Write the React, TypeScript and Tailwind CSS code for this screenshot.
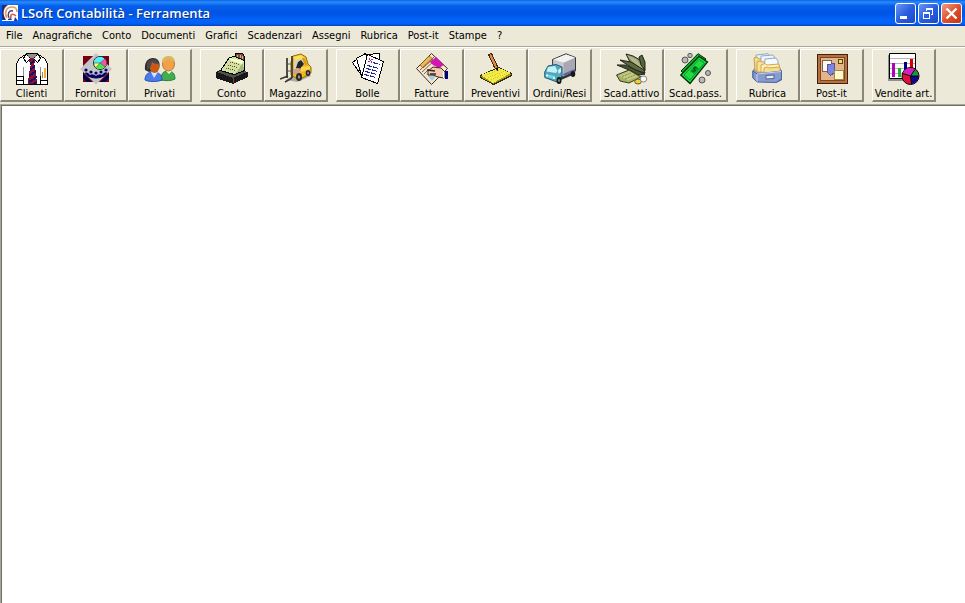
import React from 'react';

/* ---------------- ICONS ---------------- */

const Icon = ({ crisp = true, children }: { crisp?: boolean; children: React.ReactNode }) => (
  <svg
    width="32"
    height="32"
    viewBox="0 0 32 32"
    fill="none"
    shapeRendering={crisp ? 'crispEdges' : 'auto'}
    aria-hidden="true"
    className="shrink-0"
  >
    {children}
  </svg>
);

const ShirtIcon = () => (
  <Icon>
    <path d="M9.500 1.500L3.500 5.500L.5 10.500V31.500H31.500V10.500L28.500 5.500L22.500 1.500Z" fill="#fff" stroke="#000" />
    <path d="M10.500 .5H21.500L20.500 3.500L17.500 5.500H14.500L11.500 3.500Z" fill="#909090" stroke="#000" />
    <path d="M9.500 1.500L7.500 5.500L10.500 9.500L14.500 5.500M22.500 1.500L24.500 5.500L21.500 9.500L17.500 5.500" fill="#fff" stroke="#000" />
    <path d="M14 5H18L19 9L18 11L20 20L21 31H12L13 20L15 11L13 9Z" fill="#8a1030" />
    <path d="M14 11L18 8M14 17L19 13M13 23L20 18M13 29L21 24M17 31L21 29" stroke="#101070" strokeWidth="2" />
    <path d="M7.500 23V31M24.500 23V31M1 23.500H7M1 27.500H7M25 27.500H31" stroke="#000" />
    <path d="M7.500 14V23M24.500 14V23" stroke="#909090" />
    <path d="M29 15V25" stroke="#e8b040" strokeWidth="2" />
    <path d="M26.500 19V25" stroke="#c08020" />
  </Icon>
);

const SupplierIcon = () => (
  <Icon crisp={false}>
    <path d="M3 3H29V29H3Z" fill="#760010" />
    <path d="M3 20L12 29H7L3 25ZM29 20L20 29H25L29 25Z" fill="#000050" />
    <path d="M16 0L32 16L16 31.500L0 16Z" fill="#c4c4c8" />
    <path d="M4.500 20C7 18.500 9 20.500 10 22C12 20.500 14 21.500 16 23C18 21.500 20 20.500 22 22C24 19.500 26 18.500 27.500 20L24 23.500C19 26 13 26 8 23.500Z" fill="#000060" />
    <circle cx="6" cy="17" r="1.600" fill="#000060" />
    <circle cx="11" cy="19" r="1.600" fill="#000060" />
    <circle cx="16" cy="20" r="1.600" fill="#000060" />
    <circle cx="21" cy="19" r="1.600" fill="#000060" />
    <circle cx="26" cy="17" r="1.600" fill="#000060" />
    <circle cx="20" cy="10" r="6.500" fill="#ffff50" stroke="#003050" />
    <path d="M20 10H14A6 6 0 0 1 20 4Z" fill="#50f0ff" />
    <path d="M20 10V4A6 6 0 0 1 25 7Z" fill="#50f0ff" />
    <path d="M20 10L25 6A6 6 0 0 1 25 13.500Z" fill="#ff50a0" />
    <path d="M20 10L25 13.500A6 6 0 0 1 16 14.500Z" fill="#50e050" />
    <path d="M14 10H20L25 6M20 10L25 13.500M20 10L16 14.500" stroke="#206060" strokeWidth=".6" />
  </Icon>
);

const PeopleIcon = () => (
  <Icon crisp={false}>
    <path d="M17 27C17 21 19 18 24 18C29 18 31 21 31 26C27 28 22 28 17 27Z" fill="#42ad4e" stroke="#25833a" />
    <path d="M22 18L25 21L28 18Z" fill="#e8ffe0" />
    <ellipse cx="24.500" cy="11" rx="6" ry="7" fill="#f3a048" stroke="#b47c38" />
    <path d="M18 10C17 1 31 1 31 9C28 8 26 6 23 7C21 8 20 9 18 10Z" fill="#d8b860" />
    <path d="M1 27C1 22 4 19 9 19C15 19 18 22 18 27C13 29 5 29 1 27Z" fill="#4a7cec" stroke="#2850b8" />
    <path d="M7 19L10 25L14 19Z" fill="#dae6ff" />
    <path d="M1 17C0 9 4 5 9 5C14 5 17 9 15 16L5 19Z" fill="#303034" />
    <ellipse cx="10.500" cy="14" rx="4.800" ry="6" fill="#c95a16" />
    <path d="M3 10C6 5 13 5 15 11C12 11 9 10 8 9C7 13 6 16 3 17Z" fill="#48484e" />
  </Icon>
);

const RegisterIcon = () => (
  <Icon>
    <path d="M0 19L10 14L32 19V24L17 31L0 25Z" fill="#181818" />
    <path d="M1 19L17 25L31 19L29 18L18 22L4 18Z" fill="#505050" />
    <path d="M17.500 25V30" stroke="#505050" />
    <path d="M19.500 5.500V.5H26.500L28.500 3.500V8.500Z" fill="#804838" stroke="#000" />
    <path d="M21.500 2V6M24.500 2V6M26.500 3V7" stroke="#e0b0a0" />
    <path d="M4.500 17.500L13.500 4.500L18.500 3.500L28.500 7.500V17.500L18.500 21.500Z" fill="#cfe2a4" stroke="#000" />
    <path d="M14 5L28 8L26 11L13 7Z" fill="#eefccc" />
    <path d="M19 21L27 10L28 17Z" fill="#a5b97b" />
    <path d="M14 9.500H15M18 10.500H19M22 11.500H23M12 12.500H13M16 13.500H17M20 14.500H21M10 15.500H11M14 16.500H15M18 17.500H19" stroke="#c33b18" />
    <path d="M16 9.500H17M20 10.500H21M14 12.500H15M18 13.500H19M12 15.500H13M16 16.500H17" stroke="#404020" />
  </Icon>
);

const ForkliftIcon = () => (
  <Icon crisp={false}>
    <path d="M6 27L17 29L31 23L29 19L20 17Z" fill="#b0aea0" />
    <path d="M11 9L13 3L21 1L26 4L28 11L31 14V20L19 27L11 22Z" fill="#efb71d" stroke="#92700b" />
    <path d="M14 7L22 5L26 12H20L14 17Z" fill="#d8d4b8" />
    <path d="M13 4L21 2L25 5L15 7Z" fill="#ffdf53" />
    <path d="M18 9L21 7L24 11L20 16L16 15Z" fill="#22242b" />
    <path d="M23 5L26 12" stroke="#d79a0c" strokeWidth="2" />
    <path d="M13 17L18 15L22 16L18 21L13 21Z" fill="#d2a08c" />
    <path d="M21 14L30 13L30 16L21 19Z" fill="#ffd44c" />
    <ellipse cx="19" cy="24" rx="3" ry="4" fill="#292929" />
    <ellipse cx="19" cy="24" rx="1" ry="1.800" fill="#a0a0a0" />
    <ellipse cx="28" cy="20" rx="2.300" ry="3" fill="#292929" />
    <ellipse cx="28" cy="20" rx=".8" ry="1.300" fill="#a0a0a0" />
    <path d="M7 5V25M12 3V25" stroke="#403c38" strokeWidth="1.800" />
    <path d="M7 11H12M7 18H12" stroke="#595959" />
    <path d="M8 23L0 26M12 25L5 29" stroke="#353535" strokeWidth="1.500" />
  </Icon>
);

const NotesIcon = () => (
  <Icon>
    <path d="M.5 9.500L8.500 3.500L17.500 15.500L9.500 22.500Z" fill="#fff" stroke="#000" />
    <path d="M4.500 5.500L13.500 .5L19.500 18.500L9.500 22.500Z" fill="#fff" stroke="#000" />
    <path d="M14.500 1.500L27.500 .5L27.500 6.500H20.500Z" fill="#fff" stroke="#000" />
    <path d="M15.500 1.500L31.500 8.500L25.500 30.500L9.500 24.500Z" fill="#fff" stroke="#000" />
    <path d="M17 5L20 10M21 6L16 9" stroke="#a03088" />
    <path d="M21 9.500L28 11.500M15 12.500L27 15.500M14 15.500L26 18.500M13 18.500L25 21.500M12 21.500L24 24.500" stroke="#242494" strokeWidth="1.200" strokeDasharray="5 1" />
  </Icon>
);

const InvoiceIcon = () => (
  <Icon crisp={false}>
    <path d="M.5 15.500L15.500 .5L31.500 15.500L15.500 31.500Z" fill="#f4e8d0" stroke="#402c20" />
    <path d="M4 12L13 3L17 6L7 15Z" fill="#f0b850" stroke="#735014" strokeWidth=".7" />
    <path d="M4 17L18 4M6 19L19 7M8 21L13 16" stroke="#805840" />
    <path d="M14 9L20 4L28 12L23 15L17 12Z" fill="#d216b4" />
    <path d="M10 21L14 18L20 23L16 28Z" fill="#aacbe2" />
    <path d="M12 18L17 14L25 15L28 18V25L22 24L17 22L12 22Z" fill="#f4caae" stroke="#402820" />
    <path d="M11 17L19 18M14 21H20" stroke="#332823" strokeWidth="1.500" />
    <path d="M29 18H32V26H29Z" fill="#000080" />
    <path d="M27.500 18V25" stroke="#fff" />
  </Icon>
);

const PencilPadIcon = () => (
  <Icon>
    <path d="M.5 22.500L18.500 14.500L31.500 20.500V22.500L13.500 31.500L.5 24.500Z" fill="#a89c23" stroke="#302d0a" />
    <path d="M1 22L19 15L31 20L13 30Z" fill="#f2eb45" />
    <path d="M5 22.500L20 16.500M8 24.500L24 18.500M11 26.500L27 20.500" stroke="#d0c838" strokeDasharray="1 1" />
    <path d="M8.500 1.500L11.500 .5L17.500 13.500V17.500L14.500 14.500Z" fill="#dc8a48" stroke="#4a2712" />
    <path d="M16 15H18V18Z" fill="#000" />
  </Icon>
);

const TruckIcon = () => (
  <Icon crisp={false}>
    <path d="M9 22L17 27L31 21V17L14 14Z" fill="#30333a" />
    <path d="M8.500 6.500L22 .8L31.500 4.500V18L19 24L9 20Z" fill="#c9c8cc" stroke="#34343b" />
    <path d="M9.500 6.500L22 1.500L31 4.500L19.500 9.500Z" fill="#f2f2f3" />
    <path d="M19.500 10L31 5V18L19.500 23Z" fill="#a9a8b2" />
    <path d="M19.500 22L31 17" stroke="#5b62a6" strokeWidth="2" />
    <path d="M.7 19L4 13L12 11.500L18 14V23L13 29L.8 24.500Z" fill="#4ea8bf" stroke="#205e78" />
    <path d="M4 14L11 13L13.500 18L12 20L2.500 18.500Z" fill="#c4f0fa" />
    <path d="M14 17L17 15V19L14.500 21Z" fill="#d4f1f2" />
    <path d="M2 21L11 23V26L2 24Z" fill="#7cd0e4" />
    <path d="M2 22.500H4M9 25H11" stroke="#fff" strokeWidth="1.500" />
    <ellipse cx="15" cy="27.500" rx="2.500" ry="3.500" fill="#181818" />
    <ellipse cx="15" cy="27.500" rx=".8" ry="1.500" fill="#999" />
    <ellipse cx="29" cy="21" rx="2.300" ry="3" fill="#181818" />
  </Icon>
);

const WalletIcon = () => (
  <Icon crisp={false}>
    <path d="M10 1L17 3L26 8L29 18L24 17L14 9Z" fill="#8d9468" stroke="#20251b" />
    <path d="M11 2L20 6L26 14L27 17L16 8Z" fill="#b8b78c" />
    <path d="M23 4L26 2L29 9L29 17L25 12Z" fill="#56653c" stroke="#20251b" />
    <path d="M4 7L15 9L28 17L29 20L19 17Z" fill="#5b6b3c" stroke="#20251b" />
    <path d="M1 12H9L20 17L29 21L23 22L13 17Z" fill="#46552e" stroke="#20251b" />
    <path d="M.5 22L13 17L25 24L13 30L4 28Z" fill="#a9b263" stroke="#333a20" />
    <path d="M3 22.500L13 18L22 23.500L12 27.500Z" fill="#c4c882" />
    <path d="M6 23.500L15 20M9 26L19 22" stroke="#7a8a40" strokeDasharray="2 1" />
    <ellipse cx="22" cy="28.500" rx="3.300" ry="2.500" fill="#ead043" stroke="#6b5c1a" />
    <ellipse cx="27.500" cy="26" rx="3.300" ry="3" fill="#f8f8f4" stroke="#888" />
  </Icon>
);

const BanknoteIcon = () => (
  <Icon crisp={false}>
    <path d="M1 18L18 .7L26 6L9 25Z" fill="#0aa82c" stroke="#002b0b" />
    <path d="M.8 22L19 3.500L27.500 9L10 30.500Z" fill="#20dc40" stroke="#002b0b" strokeWidth="1.300" />
    <path d="M4 22L19 6.500L24.500 10L10 27Z" stroke="#009828" />
    <path d="M10 18L15 12.500L19 15.500L14 21Z" fill="#07982a" />
    <path d="M16.500 14.500L13.500 15L15.500 17.500L12.500 18.500" stroke="#003b0b" />
    <circle cx="5" cy="7" r="3" fill="#b8b8b8" stroke="#555" />
    <circle cx="10" cy="2.500" r="2.200" fill="#b8b8b8" stroke="#555" />
    <circle cx="28" cy="20" r="2.500" fill="#b8b8b8" stroke="#555" />
    <circle cx="22" cy="27" r="3" fill="#b8b8b8" stroke="#555" />
  </Icon>
);

const FileBoxIcon = () => (
  <Icon crisp={false}>
    <path d="M.8 18L4 14H27L29.500 18V27L24 29.500L4 28L.8 25Z" fill="#8298cf" stroke="#5a6d9e" />
    <path d="M4 2L16 .7L18 3V17H4Z" fill="#e8f2fc" stroke="#92aac4" />
    <path d="M2 5L5 4L7 6L16 5V18H3Z" fill="#f4da88" stroke="#c8a050" />
    <path d="M9 3L21 2L23 5V18H9Z" fill="#eef5fd" stroke="#92aac4" />
    <path d="M5 9L8 8L10 9L20 8V19H5Z" fill="#f8e298" stroke="#c8a050" />
    <path d="M13 6L24 5L26 8V18H12Z" fill="#f5faff" stroke="#92aac4" />
    <path d="M9 12L13 10.500L15 12L27 11L28 19H9Z" fill="#fff0b4" stroke="#d0a850" />
    <path d="M12 15L15 14L17 15L28 14V20H12Z" fill="#f6dc90" stroke="#d0a850" />
    <path d="M1 18L5 21L29.500 18V26L24 29.500L5 29L1 25Z" fill="#859bd2" stroke="#52679e" />
    <path d="M5 21L29 18.500M5 21V28.500" stroke="#c6d6f6" />
    <path d="M14 22.500L22 22V25.500L14 26Z" fill="#e6ebf6" stroke="#51638e" />
  </Icon>
);

const CorkboardIcon = () => (
  <Icon>
    <path d="M1.500 1.500H31.500V30.500H1.500Z" fill="#b8713c" stroke="#402010" />
    <path d="M4.500 4.500H28.500V27.500H4.500Z" fill="#e4b48a" stroke="#7c4822" />
    <path d="M6.500 7.500H15.500V18.500H6.500Z" fill="#faf9f4" stroke="#80604c" />
    <path d="M11.500 11.500L18.500 10.500V19.500L14.500 22.500L11.500 19.500Z" fill="#7c86e0" stroke="#5058a0" />
    <path d="M18.500 17.500H27.500V26.500H18.500Z" fill="#fff8c9" stroke="#a08850" />
    <path d="M22.500 6.500H26.500V10.500H22.500Z" fill="#e8dc78" stroke="#554414" />
  </Icon>
);

const SalesChartIcon = () => (
  <Icon crisp={false}>
    <path d="M0 2H3V26H20V28H0Z" fill="#909090" />
    <path d="M1.500 .5H27.500V25.500H1.500Z" fill="#fff" stroke="#000" />
    <path d="M2 5.500H27M2 10.500H27M2 15.500H27M2 20.500H27" stroke="#b5b5b5" />
    <path d="M5.500 10V24" stroke="#b800b8" strokeWidth="3" />
    <path d="M11.500 15V24" stroke="#20b030" strokeWidth="3" />
    <path d="M17.500 9V24" stroke="#000080" strokeWidth="3" />
    <path d="M23.500 6V24" stroke="#d80000" strokeWidth="3" />
    <circle cx="22.500" cy="23" r="8.500" fill="#e0103c" stroke="#000" />
    <path d="M22.500 23L14.700 20.500A8 8 0 0 1 27 16.500Z" fill="#cf23bf" />
    <path d="M22.500 23L27 16.500A8 8 0 0 1 30.500 23Z" fill="#189848" />
    <path d="M22.500 23H30.500A8 8 0 0 1 23.500 31Z" fill="#0a0a90" />
    <path d="M14.700 20.500L22.500 23L27 16.500M22.500 23H30.500M22.500 23L23.500 31" stroke="#000" strokeWidth=".9" />
  </Icon>
);

const AppLogo = () => (
  <svg width="16" height="16" viewBox="0 0 16 16" fill="none" aria-hidden="true" className="shrink-0">
    <path d="M0 0H16V16H0Z" fill="#fff" />
    <path d="M6 0H0V15L4 15C1 10 0 4 6 0Z" fill="#252b78" />
    <path d="M5 13C2 8 4 2 10 2C13 2 15 4 15 7" stroke="#e99c55" strokeWidth="1.600" />
    <path d="M7 13C5 9 7 5 11 6" stroke="#40407f" strokeWidth="1.400" />
    <path d="M9 13C8 9 11 8 14 11" stroke="#d55e45" strokeWidth="1.600" />
    <path d="M6 14L9 13L10 15H6ZM13 12L16 16H12Z" fill="#31307f" />
  </svg>
);

/* ---------------- DATA ---------------- */

const menus = [
  'File',
  'Anagrafiche',
  'Conto',
  'Documenti',
  'Grafici',
  'Scadenzari',
  'Assegni',
  'Rubrica',
  'Post-it',
  'Stampe',
  '?',
];

const toolGroups = [
  [
    { label: 'Clienti', icon: ShirtIcon },
    { label: 'Fornitori', icon: SupplierIcon },
    { label: 'Privati', icon: PeopleIcon },
  ],
  [
    { label: 'Conto', icon: RegisterIcon },
    { label: 'Magazzino', icon: ForkliftIcon },
  ],
  [
    { label: 'Bolle', icon: NotesIcon },
    { label: 'Fatture', icon: InvoiceIcon },
    { label: 'Preventivi', icon: PencilPadIcon },
    { label: 'Ordini/Resi', icon: TruckIcon },
  ],
  [
    { label: 'Scad.attivo', icon: WalletIcon },
    { label: 'Scad.pass.', icon: BanknoteIcon },
  ],
  [
    { label: 'Rubrica', icon: FileBoxIcon },
    { label: 'Post-it', icon: CorkboardIcon },
  ],
  [{ label: 'Vendite art.', icon: SalesChartIcon }],
];

/* ---------------- WINDOW PARTS ---------------- */

const captionButton =
  'flex size-[21px] items-center justify-center rounded-[3px] border border-white bg-gradient-to-br';

const TitleBar = () => (
  <header className="flex h-[26px] items-center bg-[linear-gradient(180deg,#0c62e0_0%,#2a8bff_8%,#0560ea_22%,#0054e3_50%,#0264fc_80%,#0260f4_90%,#0144be_100%)] pr-[3px] pl-[2px]">
    <AppLogo />
    <h1 className="ml-[3px] flex-1 truncate font-['Open_Sans','Noto_Sans',sans-serif] text-[13px] leading-[20px] font-semibold text-white [text-shadow:1px_1px_#0a318a]">
      LSoft Contabilità - Ferramenta
    </h1>
    <div className="flex gap-[2px]">
      <button aria-label="Riduci a icona" className={`${captionButton} from-[#6c96f3] via-[#2a5ee0] to-[#1a49c8]`}>
        <svg width="19" height="19" viewBox="0 0 19 19" shapeRendering="crispEdges">
          <path d="M4 12H11V15H4Z" fill="#fff" />
        </svg>
      </button>
      <button aria-label="Ripristina" className={`${captionButton} from-[#6c96f3] via-[#2a5ee0] to-[#1a49c8]`}>
        <svg width="19" height="19" viewBox="0 0 19 19" fill="#fff" fillRule="evenodd" shapeRendering="crispEdges">
          <path d="M7 4H14V11H12V10H13V6H8V7H7ZM4 8H11V15H4ZM5 10V14H10V10Z" />
        </svg>
      </button>
      <button aria-label="Chiudi" className={`${captionButton} from-[#f09a80] via-[#e0502c] to-[#bf3513]`}>
        <svg width="19" height="19" viewBox="0 0 19 19" stroke="#fff" strokeWidth="2.400">
          <path d="M4.500 4.500L14.500 14.500M14.500 4.500L4.500 14.500" />
        </svg>
      </button>
    </div>
  </header>
);

const MenuBar = () => (
  <nav className="flex h-5 items-center bg-[#ece9d8] pb-[2px] pl-px">
    {menus.map((menu) => (
      <button key={menu} className="h-full px-[5px] leading-none">
        {menu}
      </button>
    ))}
  </nav>
);

const Toolbar = () => (
  <div
    role="toolbar"
    className="flex gap-2 border-t border-[#aca899] bg-[#ece9d8] pt-[2px] pb-[2px] shadow-[inset_0_1px_#fff]"
  >
    {toolGroups.map((group, i) => (
      <div key={i} className="flex">
        {group.map(({ label, icon: ToolIcon }) => (
          <button
            key={label}
            className="flex h-[53px] w-16 flex-col items-center gap-[2px] border-t border-r-2 border-b-2 border-l border-t-white border-r-[#8b8879] border-b-[#8b8879] border-l-white pt-[3px] leading-[13px] whitespace-nowrap"
          >
            <ToolIcon />
            {label}
          </button>
        ))}
      </div>
    ))}
  </div>
);

const App: React.FC = () => (
  <div className="flex min-h-screen flex-col bg-[#ece9d8] font-['DejaVu_Sans_Condensed','DejaVu_Sans',sans-serif] text-[11px] text-black">
    <TitleBar />
    <MenuBar />
    <Toolbar />
    <div className="flex flex-1 border-t border-l border-[#aca899]">
      <main className="flex-1 border-t border-l border-[#716f64] bg-white" />
    </div>
  </div>
);

export default App;
